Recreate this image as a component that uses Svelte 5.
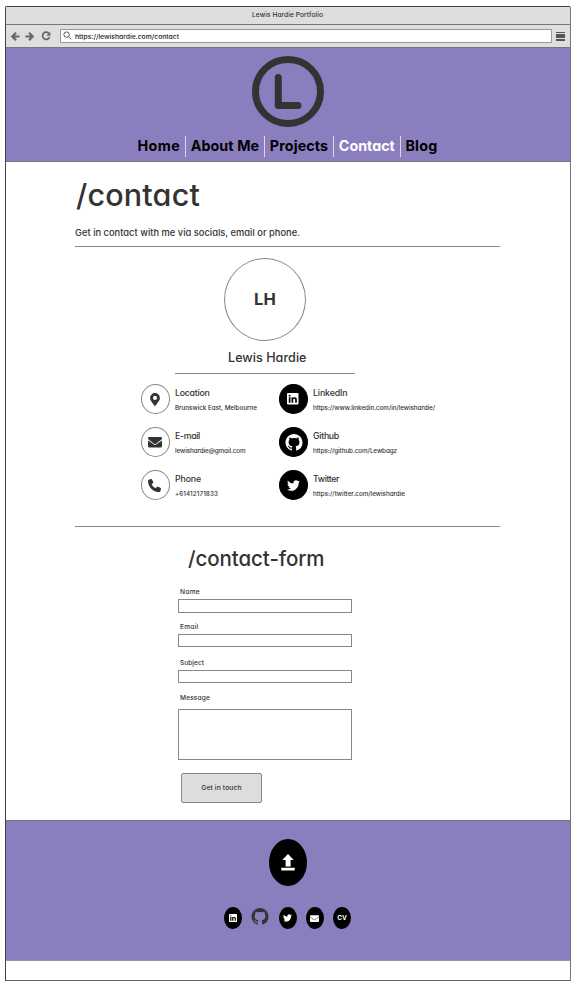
<script>
  const nav = [
    { text: 'Home', w: 42.5 },
    { text: 'About Me', w: 68.5 },
    { text: 'Projects', w: 58.5 },
    { text: 'Contact', w: 56, active: true },
    { text: 'Blog', w: 32 }
  ];
  const contacts = [
    { icon: 'pin', title: 'Location', tw: 34.5, text: 'Brunswick East, Melbourne', w: 82 },
    { icon: 'linkedin', title: 'LinkedIn', tw: 34.5, text: 'https://www.linkedin.com/in/lewishardie/', w: 122, dark: true },
    { icon: 'mail', title: 'E-mail', tw: 25, text: 'lewishardie@gmail.com', w: 70.5 },
    { icon: 'github', title: 'Github', tw: 26, text: 'https://github.com/Lewbagz', w: 84, dark: true },
    { icon: 'phone', title: 'Phone', tw: 26, text: '+61412171833', w: 43 },
    { icon: 'twitter', title: 'Twitter', tw: 26, text: 'https://twitter.com/lewishardie', w: 92, dark: true }
  ];
  const fields = [
    { text: 'Name', w: 20 },
    { text: 'Email', w: 18.5 },
    { text: 'Subject', w: 24 },
    { text: 'Message', w: 30 }
  ];
  const socials = ['linkedin', 'github', 'twitter', 'mail', 'cv'];

  // Tracks the text of an element so that it spans the given width.
  function track(node, width) {
    const natural = node.getBoundingClientRect().width;
    node.style.letterSpacing = `${(width - natural) / node.textContent.length}px`;
  }
</script>

{#snippet icon(name)}
  {#if name === 'pin'}
    <svg class="i-pin" viewBox="0 0 384 512"><path d="M172 502C27 291 0 270 0 192a192 192 0 1 1 384 0c0 78-27 99-172 310a24 24 0 0 1-40 0zM192 272a80 80 0 1 0 0-160 80 80 0 0 0 0 160z" /></svg>
  {:else if name === 'mail'}
    <svg class="i-mail" viewBox="0 0 512 384"><path d="M502 127c4-3 10 0 10 5v204a48 48 0 0 1-48 48H48a48 48 0 0 1-48-48V132c0-5 6-8 10-5 22 17 52 39 154 114 21 15 57 48 92 47 35 0 72-33 92-47 102-75 132-97 154-114zM256 256c23 0 57-29 73-41 133-96 143-105 173-129 6-4 10-11 10-19V48a48 48 0 0 0-48-48H48A48 48 0 0 0 0 48v19c0 8 4 14 10 19 30 24 40 33 173 129 16 12 50 41 73 41z" /></svg>
  {:else if name === 'phone'}
    <svg class="i-phone" viewBox="0 0 512 512"><path d="M165 25c-8-19-29-29-49-24L28 25C11 30 0 46 0 64c0 247 201 448 448 448 18 0 34-12 39-29l24-88c5-20-5-41-24-49l-96-40c-16-7-35-2-46 12l-41 49c-70-33-127-90-161-160l50-41c13-11 18-30 12-46z" /></svg>
  {:else if name === 'linkedin'}
    <svg class="i-linkedin" viewBox="0 0 448 448"><path d="M416 0H32C14 0 0 15 0 32v384c0 17 14 32 32 32h384c18 0 32-15 32-32V32c0-17-14-32-32-32zM135 384H69V170h66zM102 141a38 38 0 1 1 0-77 38 38 0 0 1 0 77zm282 243h-66V280c0-25 0-57-35-57s-40 27-40 55v106h-66V170h64v29h1c9-17 30-35 63-35 67 0 79 45 79 102z" /></svg>
  {:else if name === 'github'}
    <svg class="i-github" viewBox="0 0 16 16"><path d="M8 0C3.58 0 0 3.58 0 8c0 3.54 2.29 6.53 5.47 7.59.4.07.55-.17.55-.38 0-.19-.01-.82-.01-1.49-2.01.37-2.53-.49-2.69-.94-.09-.23-.48-.94-.82-1.13-.28-.15-.68-.52-.01-.53.63-.01 1.08.58 1.23.82.72 1.21 1.87.87 2.33.66.07-.52.28-.87.51-1.07-1.78-.2-3.64-.89-3.64-3.95 0-.87.31-1.59.82-2.15-.08-.2-.36-1.02.08-2.12 0 0 .67-.21 2.2.82.64-.18 1.32-.27 2-.27s1.36.09 2 .27c1.53-1.04 2.2-.82 2.2-.82.44 1.1.16 1.92.08 2.12.51.56.82 1.27.82 2.15 0 3.07-1.87 3.75-3.65 3.95.29.25.54.73.54 1.48 0 1.07-.01 1.93-.01 2.2 0 .21.15.46.55.38A8.01 8.01 0 0 0 16 8c0-4.42-3.58-8-8-8z" /></svg>
  {:else if name === 'twitter'}
    <svg class="i-twitter" viewBox="0 0 512 416"><path d="M459 104c0 4 0 9 0 14 0 138-105 298-298 298-59 0-114-17-161-47 8 1 16 1 25 1 49 0 94-16 130-45-46-1-85-31-98-73 7 1 13 2 20 2 9 0 19-1 28-4-48-10-84-52-84-103v-1c14 8 30 13 47 13-28-19-46-51-46-87 0-19 5-37 14-53 52 64 129 105 216 110-2-8-3-16-3-24 0-58 47-105 105-105 30 0 57 13 77 33 24-5 46-13 66-25-8 24-24 45-46 58 21-2 42-8 61-16-14 21-32 39-53 54z" /></svg>
  {:else}
    <span class="cv">CV</span>
  {/if}
{/snippet}

<div class="window">
  <div class="titlebar"><span use:track={71}>Lewis Hardie Portfolio</span></div>
  <div class="toolbar">
    <svg class="arrow" viewBox="0 0 9 9"><path d="M8.5 4.5H1.5M5 .8 1.3 4.5 5 8.2" /></svg>
    <svg class="arrow" viewBox="0 0 9 9"><path d="M.5 4.5h7M4 .8l3.7 3.7L4 8.2" /></svg>
    <svg class="reload" viewBox="0 0 10 10"><path d="M7.8 2.3A3.6 3.6 0 1 0 8.6 6" /><path class="tip" d="M9.3.8v4H5.3z" /></svg>
    <div class="url">
      <svg viewBox="0 0 10 10"><circle cx="4" cy="4" r="3" /><path d="M6.2 6.2 9.2 9.2" /></svg>
      <span use:track={104}>https://lewishardie.com/contact</span>
    </div>
    <div class="menu"><i></i><i></i><i></i><i></i></div>
  </div>

  <header>
    <svg class="logo" viewBox="0 0 72 71"><ellipse cx="36" cy="35.5" rx="32.5" ry="32" /><path d="M26.3 21.5V49.5H46" /></svg>
    <nav>
      {#each nav as item}
        <a href="#top" class:active={item.active}><span use:track={item.w}>{item.text}</span></a>
      {/each}
    </nav>
  </header>

  <main>
    <h1><span use:track={124}>/contact</span></h1>
    <p class="intro"><span use:track={225}>Get in contact with me via socials, email or phone.</span></p>
    <hr />
    <section class="profile">
      <div class="avatar"><span use:track={22}>LH</span></div>
      <div class="name"><span use:track={78.5}>Lewis Hardie</span></div>
      <hr />
    </section>
    <section class="contacts">
      {#each contacts as c}
        <div class="contact">
          <div class="disc" class:dark={c.dark}>{@render icon(c.icon)}</div>
          <div class="info">
            <div class="title"><span use:track={c.tw}>{c.title}</span></div>
            <div class="detail"><span use:track={c.w}>{c.text}</span></div>
          </div>
        </div>
      {/each}
    </section>
    <hr />
    <form>
      <h2><span use:track={136.5}>/contact-form</span></h2>
      {#each fields as f}
        <label>
          <span class="label" use:track={f.w}>{f.text}</span>
          {#if f.text === 'Message'}<textarea></textarea>{:else}<input type="text" />{/if}
        </label>
      {/each}
      <button type="button"><span use:track={40.5}>Get in touch</span></button>
    </form>
  </main>

  <footer>
    <div class="upload">
      <svg viewBox="0 0 14 17"><path d="M7 0 12.8 6H9.6v6.5H4.6V6H1.2zM.3 13.8h13.4v2.6H.3z" /></svg>
    </div>
    <div class="socials">
      {#each socials as s}
        <div class="social" class:bare={s === 'github'}>{@render icon(s)}</div>
      {/each}
    </div>
  </footer>
</div>

<style>
  :global(body) { background: #fff; }
  .window, .window * { box-sizing: border-box; }
  .window {
    width: 566px;
    height: 975px;
    margin: 6px 0 0 5px;
    border: 1px solid #444;
    border-right-color: #777;
    border-bottom-color: #666;
    border-radius: 2px 2px 0 0;
    font-family: Inter, 'Open Sans', sans-serif;
    font-feature-settings: 'cv11';
    color: #333;
  }
  span { display: inline-block; white-space: nowrap; }
  svg { display: block; flex: none; overflow: visible; }
  h1, h2, p { margin: 0; font-weight: 600; }
  hr { border: 0; height: 1px; margin: 0; background: #888; }

  .titlebar {
    height: 18px;
    background: #dededd;
    border-bottom: 1px solid #777;
    display: flex;
    justify-content: center;
    padding-right: 1px;
    font-size: 6.6px;
    font-weight: 500;
    line-height: 16px;
  }
  .toolbar {
    height: 23px;
    background: #dededd;
    border-bottom: 1px solid #777;
    display: flex;
    align-items: center;
    padding: 0 5px;
  }
  .arrow { width: 9px; height: 9px; margin-right: 5px; fill: none; stroke: #666; stroke-width: 2.2; }
  .reload { width: 10px; height: 10px; margin: 0 9px 0 2px; fill: none; stroke: #666; stroke-width: 1.7; }
  .reload .tip { fill: #666; stroke: none; }
  .url {
    flex: 1;
    height: 14px;
    background: #fff;
    border: 1px solid #999;
    display: flex;
    align-items: center;
    gap: 3px;
    padding: 2px 0 0 2px;
    font-size: 6.8px;
    line-height: 10px;
    font-weight: 500;
    color: #222;
  }
  .url svg { width: 9px; height: 9px; margin-top: -3px; fill: none; stroke: #555; stroke-width: 1.1; }
  .menu { width: 9px; height: 9px; margin-left: 4px; display: flex; flex-direction: column; justify-content: space-between; }
  .menu i { height: 1.6px; background: #555; }

  header {
    height: 114px;
    background: #8a7ebe;
    border-bottom: 1px solid #77727f;
    display: flex;
    flex-direction: column;
    align-items: center;
    padding-top: 8px;
  }
  .logo { width: 72px; height: 71px; fill: none; stroke: #333; stroke-width: 7; stroke-linecap: round; stroke-linejoin: round; }
  nav { display: flex; margin-top: 9px; padding-right: 1px; }
  nav a {
    height: 21px;
    line-height: 20px;
    padding: 0 4.8px;
    font-size: 14.3px;
    font-weight: 700;
    color: #000;
    text-decoration: none;
  }
  nav a + a { border-left: 1.5px solid #dcd7ec; }
  nav a.active { color: #fff; }

  main { height: 658px; padding: 15px 70px 0 69px; }
  h1 { height: 36px; line-height: 36px; font-size: 30.5px; padding-left: 1px; font-weight: 500; }
  .intro { height: 12px; line-height: 12px; margin: 14px 0 7px; font-size: 9.3px; font-weight: 500; }
  .profile { width: 180px; margin: 11px 0 0 100px; display: flex; flex-direction: column; }
  .avatar {
    width: 82px;
    height: 83px;
    margin-left: 49px;
    padding-bottom: 2px;
    border: 1px solid #888;
    border-radius: 50%;
    display: flex;
    align-items: center;
    justify-content: center;
    font-size: 16.5px;
    font-weight: 700;
  }
  .name { height: 16px; line-height: 16px; margin: 9px 0 7px 53px; font-size: 12.6px; font-weight: 500; }
  .contacts {
    display: grid;
    grid-template-columns: 138px 170px;
    grid-auto-rows: 29px;
    row-gap: 14px;
    margin: 10px 0 27px 66px;
  }
  .contact { display: flex; gap: 5px; }
  .disc {
    width: 29px;
    height: 30px;
    border: 1px solid #888;
    border-radius: 50%;
    display: flex;
    align-items: center;
    justify-content: center;
    fill: #333;
  }
  .disc.dark { background: #000; border-color: #000; fill: #fff; }
  .info { padding-top: 3px; }
  .title { height: 11px; line-height: 11px; font-size: 8.8px; font-weight: 500; }
  .detail { height: 8px; line-height: 8px; margin-top: 6px; font-size: 6.3px; font-weight: 500; }
  .i-pin { width: 10px; height: 13px; }
  .i-mail { width: 14px; height: 10.5px; }
  .i-phone { width: 13px; height: 13px; }
  .i-linkedin { width: 11.5px; height: 11.5px; }
  .i-github { width: 18px; height: 17px; }
  .i-twitter { width: 13px; height: 11px; }
  .disc .i-pin, .disc .i-linkedin { margin-right: 1px; }
  .disc .i-mail, .disc .i-phone { margin-right: 1.5px; }

  form { width: 174px; margin-left: 103px; }
  h2 { height: 26px; line-height: 26px; margin: 19px 0 16px; padding-left: 10px; font-size: 20.5px; font-weight: 500; }
  label { display: flex; flex-direction: column; align-items: flex-start; }
  .label { margin-left: 2px; height: 8px; line-height: 8px; font-size: 6.6px; font-weight: 500; }
  input, textarea {
    display: block;
    width: 174px;
    height: 13px;
    margin: 3px 0 12px;
    padding: 0;
    border: 1px solid #888;
    border-radius: 0;
    background: #fff;
    resize: none;
    outline: 0;
  }
  label:nth-of-type(1) input { height: 14px; margin-bottom: 10px; }
  label:nth-of-type(3) input { margin-bottom: 11px; }
  textarea { height: 51px; margin: 7px 0 13px; }
  button {
    display: flex;
    align-items: center;
    justify-content: center;
    width: 81px;
    height: 30px;
    margin-left: 3px;
    padding: 0 0 1px;
    border: 1px solid #888;
    border-radius: 2px;
    background: #ddd;
    color: #333;
    font: inherit;
    font-feature-settings: inherit;
    font-size: 6.8px;
    font-weight: 500;
  }

  footer {
    height: 141px;
    background: #8a7ebe;
    border-top: 1px solid #777;
    border-bottom: 1px solid #999;
    display: flex;
    flex-direction: column;
    align-items: center;
    padding: 18px 1px 0 0;
  }
  .upload {
    width: 38px;
    height: 47px;
    border-radius: 50%;
    background: #000;
    fill: #fff;
    display: flex;
    align-items: center;
    justify-content: center;
  }
  .upload svg { width: 14px; height: 17px; }
  .socials { display: flex; gap: 9.3px; margin-top: 21px; }
  .social {
    width: 18px;
    height: 22px;
    border-radius: 50%;
    background: #000;
    fill: #fff;
    display: flex;
    align-items: center;
    justify-content: center;
  }
  .social .i-linkedin { width: 8px; height: 8px; }
  .social .i-twitter { width: 9px; height: 8px; }
  .social .i-mail { width: 9px; height: 7px; }
  .social.bare { background: none; fill: #333; padding-bottom: 4px; }
  .cv { color: #fff; font-size: 6.5px; font-weight: 700; }
</style>
